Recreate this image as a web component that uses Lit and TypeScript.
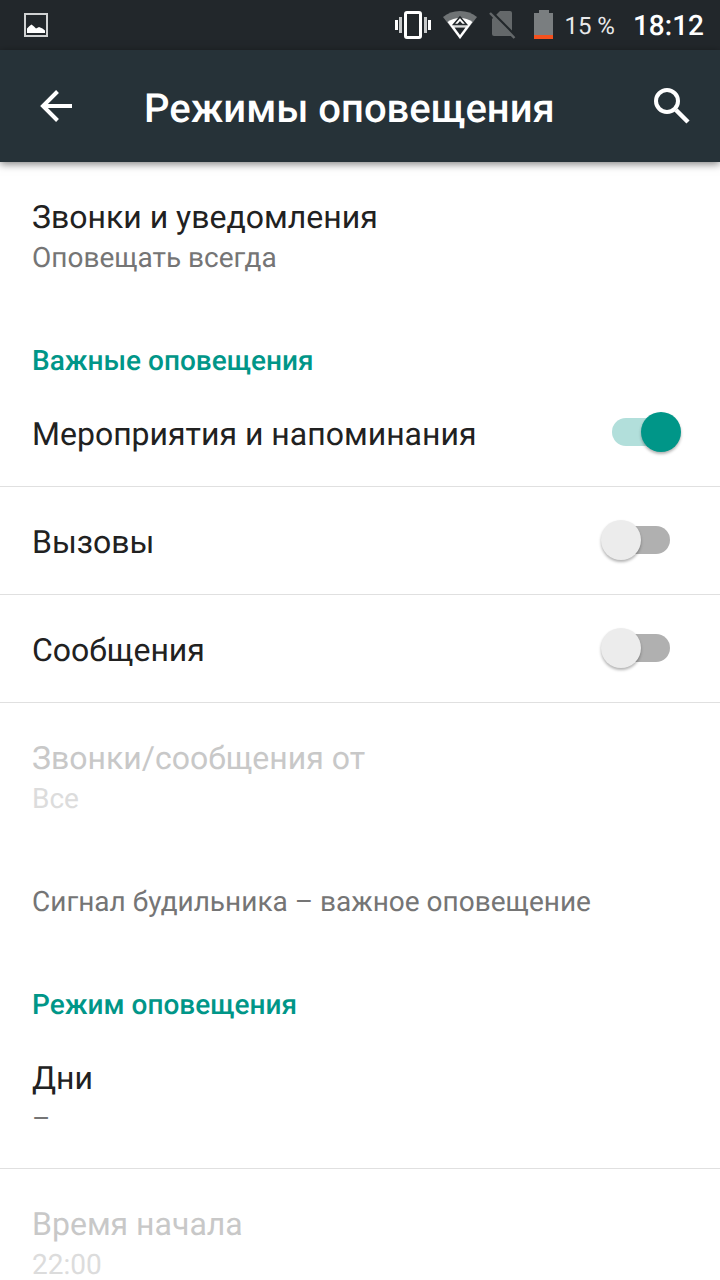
import { LitElement, html, css, nothing } from "lit";
import { customElement, property, state } from "lit/decorators.js";

@customElement("status-bar")
class StatusBar extends LitElement {
  static styles = css`
    :host {
      display: flex;
      align-items: center;
      height: 50px;
      padding: 0 16px 0 24px;
      background: #22272b;
      color: #fff;
    }
    svg {
      display: block;
      flex: none;
    }
    .system {
      display: flex;
      align-items: center;
      margin-left: auto;
    }
    .vibrate { margin-right: 12px; }
    .wifi { margin-right: 12px; }
    .sim { margin-right: 18px; }
    .battery { margin-right: 10px; }
    .percent,
    .clock {
      padding-top: 2px;
      line-height: 32px;
    }
    .percent {
      margin-right: 18px;
      font-size: 24px;
      color: #e9e9ea;
    }
    .clock {
      font-size: 28px;
      font-weight: 500;
    }
  `;

  render() {
    return html`
      <svg width="24" height="24" viewBox="0 0 24 24" aria-hidden="true">
        <rect x="1" y="1" width="22" height="22" fill="none" stroke="#d0d2d3" stroke-width="2" />
        <path d="M3 20v-4.500L5.500 13l2-1.500L10 13.500l2 2 3-1.500 3.500 1.500 2.500 2V20z" fill="#fff" />
      </svg>
      <div class="system">
        <svg class="vibrate" width="36" height="28" viewBox="0 0 36 28" aria-hidden="true">
          <rect x="10.500" y="1.500" width="15" height="25" rx="1.500" fill="none" stroke="#fff" stroke-width="3" />
          <path d="M4 6h3v16H4zM29 6h3v16h-3z" fill="#c6c8c9" />
          <path d="M0 9h3v10H0zM33 9h3v10h-3z" fill="#fff" />
        </svg>
        <svg class="wifi" width="34" height="28" viewBox="0 0 34 28" aria-hidden="true">
          <path d="M0 6Q7 0 17 0t17 6L17 28z" fill="#6f7375" />
          <path d="M4.500 11Q10 7 17 7t12.500 4L17 28z" fill="#fff" />
          <path d="M17 6l6.500 7.500h-13z" fill="#fff" stroke="#22272b" stroke-width="1.500" />
          <path d="M17 10l2.500 3h-5z" fill="#22272b" />
          <path d="M10.500 14.700h13" stroke="#aeb1b2" stroke-width="1.500" />
          <path d="M11.500 16.500h11L17 24z" fill="#22272b" />
        </svg>
        <svg class="sim" width="27" height="28" viewBox="0 0 27 28" aria-hidden="true">
          <path d="M11 0h10q2 0 2 2v23H5q-2 0-2-2V8z" fill="#64686a" />
          <path d="M2.500 1L27 25.500" stroke="#22272b" stroke-width="3" />
          <path d="M1 2l24.500 25" stroke="#64686a" stroke-width="2.500" />
        </svg>
        <svg class="battery" width="20" height="30" viewBox="0 0 20 30" aria-hidden="true">
          <path d="M5 0h10v3h4v22H0V3h5z" fill="#7a7e80" />
          <path d="M0 25h19v4H0z" fill="#f4511e" />
        </svg>
        <span class="percent">15 %</span>
        <span class="clock">18:12</span>
      </div>
    `;
  }
}

@customElement("app-toolbar")
class AppToolbar extends LitElement {
  @property() heading = "";

  static styles = css`
    :host {
      display: flex;
      align-items: center;
      height: 112px;
      background: #263238;
      color: #fff;
      box-shadow: 0 2px 8px rgba(0, 0, 0, 0.5);
      z-index: 1;
    }
    button {
      flex: none;
      display: grid;
      place-items: center;
      width: 112px;
      height: 112px;
      padding: 0;
      border: 0;
      background: none;
      color: inherit;
      cursor: pointer;
    }
    .search { width: 96px; }
    h1 {
      flex: 1;
      min-width: 0;
      margin: 0;
      padding: 6px 0 0 32px;
      font-size: 40px;
      line-height: 48px;
      font-weight: 500;
      white-space: nowrap;
    }
  `;

  render() {
    return html`
      <button aria-label="Назад">
        <svg width="32" height="32" viewBox="0 0 32 32" fill="none" stroke="#fff" stroke-width="4">
          <path d="M32 16H4M17.500 1.500L3 16l14.500 14.500" />
        </svg>
      </button>
      <h1>${this.heading}</h1>
      <button class="search" aria-label="Поиск">
        <svg width="36" height="36" viewBox="0 0 36 36" fill="none" stroke="#fff" stroke-width="4">
          <circle cx="13" cy="13" r="11" />
          <path d="M22 22l12 12" stroke-width="4.500" />
        </svg>
      </button>
    `;
  }
}

@customElement("pref-item")
class PrefItem extends LitElement {
  @property() label = "";
  @property() summary = "";
  @property({ type: Boolean, reflect: true }) divider = false;
  @property({ type: Boolean, reflect: true }) disabled = false;

  static styles = css`
    :host {
      display: block;
      box-sizing: border-box;
      height: 146px;
      border-bottom: 1px solid transparent;
    }
    :host([divider]) { border-color: #e0e0e0; }
    button {
      display: block;
      width: 100%;
      height: 100%;
      padding: 6px 32px 0;
      border: 0;
      background: none;
      font: inherit;
      text-align: left;
      text-rendering: inherit;
      cursor: pointer;
    }
    .label {
      display: block;
      font-size: 32px;
      line-height: 40px;
      color: #212121;
    }
    .summary {
      display: block;
      font-size: 28px;
      line-height: 42px;
      color: #757575;
    }
    button:disabled { cursor: default; }
    :host([disabled]) .label { color: #c8c8c8; }
    :host([disabled]) .summary { color: #dcdcdc; }
  `;

  render() {
    return html`
      <button ?disabled=${this.disabled}>
        <span class="label">${this.label}</span>
        ${this.summary ? html`<span class="summary">${this.summary}</span>` : nothing}
      </button>
    `;
  }
}

@customElement("pref-switch")
class PrefSwitch extends LitElement {
  @property() label = "";
  @property({ type: Boolean }) checked = false;

  static styles = css`
    :host { display: block; }
    label {
      display: flex;
      align-items: center;
      justify-content: space-between;
      box-sizing: border-box;
      height: 108px;
      padding: 0 50px 0 32px;
      border-bottom: 1px solid #e0e0e0;
      font-size: 32px;
      line-height: 40px;
      color: #212121;
      cursor: pointer;
    }
    span { padding-top: 2px; }
    input {
      appearance: none;
      position: relative;
      flex: none;
      width: 58px;
      height: 28px;
      margin: 0 0 2px;
      border-radius: 14px;
      background: #b0b0b0;
      cursor: pointer;
    }
    input::before {
      content: "";
      position: absolute;
      top: -6px;
      left: -11px;
      width: 40px;
      height: 40px;
      border-radius: 50%;
      background: #ececec;
      box-shadow: 0 2px 3px rgba(0, 0, 0, 0.3);
    }
    input:checked { background: #b2dfdb; }
    input:checked::before {
      left: 29px;
      background: #009688;
    }
  `;

  render() {
    return html`
      <label>
        <span>${this.label}</span>
        <input type="checkbox" role="switch" .checked=${this.checked} @change=${this.onChange} />
      </label>
    `;
  }

  private onChange(e: Event) {
    this.checked = (e.target as HTMLInputElement).checked;
  }
}

@customElement("app-root")
class AppRoot extends LitElement {
  @state() private switches = [
    { label: "Мероприятия и напоминания", on: true },
    { label: "Вызовы", on: false },
    { label: "Сообщения", on: false },
  ];

  static styles = css`
    :host {
      display: flex;
      flex-direction: column;
      height: 100vh;
      overflow: hidden;
      background: #fff;
      font-family: Roboto, "Noto Sans", sans-serif;
      text-rendering: geometricPrecision;
    }
    status-bar,
    app-toolbar { flex: none; }
    main {
      flex: 1;
      min-height: 0;
      overflow: hidden;
    }
    h2 {
      box-sizing: border-box;
      height: 71px;
      margin: 0;
      padding: 33px 32px 0;
      font-size: 28px;
      line-height: 40px;
      font-weight: 500;
      color: #009688;
    }
    .note {
      margin: 0;
      padding: 33px 32px 30px;
      font-size: 28px;
      line-height: 40px;
      color: #757575;
    }
  `;

  render() {
    return html`
      <status-bar></status-bar>
      <app-toolbar heading="Режимы оповещения"></app-toolbar>
      <main>
        <pref-item label="Звонки и уведомления" summary="Оповещать всегда"></pref-item>
        <h2>Важные оповещения</h2>
        ${this.switches.map(
          (s) => html`<pref-switch label=${s.label} ?checked=${s.on}></pref-switch>`
        )}
        <pref-item label="Звонки/сообщения от" summary="Все" disabled></pref-item>
        <p class="note">Сигнал будильника – важное оповещение</p>
        <h2>Режим оповещения</h2>
        <pref-item label="Дни" summary="–" divider></pref-item>
        <pref-item label="Время начала" summary="22:00" disabled></pref-item>
      </main>
    `;
  }
}
